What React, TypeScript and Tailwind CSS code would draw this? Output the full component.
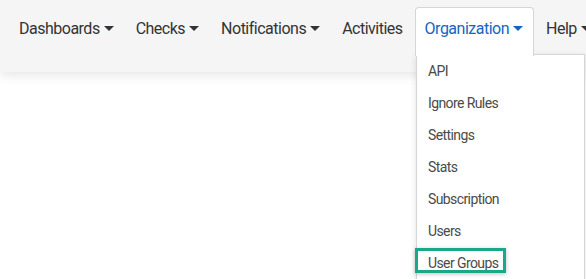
import React from "react";

const Caret = ({ color }: { color: string }) => (
  <span
    className={`inline-block w-0 h-0 ml-[4px] align-middle border-t-[5px] border-x-[5px] border-x-transparent ${color}`}
    style={{ marginTop: -2 }}
  />
);

export default function App() {
  const items = ["API", "Ignore Rules", "Settings", "Stats", "Subscription", "Users", "User Groups"];
  return (
    <div
      className="relative w-full h-[279px] bg-white overflow-hidden"
      style={{ fontFamily: "Roboto, 'Noto Sans', sans-serif" }}
    >
      <nav className="relative h-[72px] bg-[#f5f5f5] shadow-[0_2px_12px_rgba(0,0,0,0.12)]">
        <ul className="flex items-start pt-[7px] pl-[9px] gap-[2px] text-[16px] tracking-[-0.5px] text-[#333] whitespace-nowrap">
          <li className="h-[48px] px-[10px] pt-[10px] leading-[24px]">
            Dashboards<Caret color="border-t-[#333]" />
          </li>
          <li className="h-[48px] px-[10px] pt-[10px] leading-[24px]">
            Checks<Caret color="border-t-[#333]" />
          </li>
          <li className="h-[48px] px-[10px] pt-[10px] leading-[24px]">
            Notifications<Caret color="border-t-[#333]" />
          </li>
          <li className="h-[48px] px-[10px] pt-[10px] leading-[24px]">Activities</li>
          <li className="relative z-20 h-[49px] pl-[9px] pr-[10px] pt-[9px] leading-[24px] bg-white border border-b-0 border-[#d6d6d6] rounded-t-[4px] text-[#1565c0]">
            Organization<Caret color="border-t-[#1565c0]" />
          </li>
          <li className="h-[48px] px-[10px] pt-[10px] leading-[24px]">
            Help<Caret color="border-t-[#333]" />
          </li>
        </ul>
      </nav>

      <div className="absolute z-10 left-[416px] top-[54px] w-[169px] h-[260px] bg-white border border-[#d6d6d6] shadow-[0_2px_6px_rgba(0,0,0,0.12)]">
        <ul className="text-[14px] tracking-[-0.6px] text-[#4a4a4a]">
          {items.map((it) => (
            <li key={it} className="h-[32px] leading-[32px] px-[11px] whitespace-nowrap">
              {it}
            </li>
          ))}
        </ul>
      </div>

      <div className="absolute z-30 left-[415px] top-[248px] w-[91px] h-[25px] border-[3px] border-[#1aa88a] shadow-[0_1px_4px_rgba(0,0,0,0.25)]" />
    </div>
  );
}
